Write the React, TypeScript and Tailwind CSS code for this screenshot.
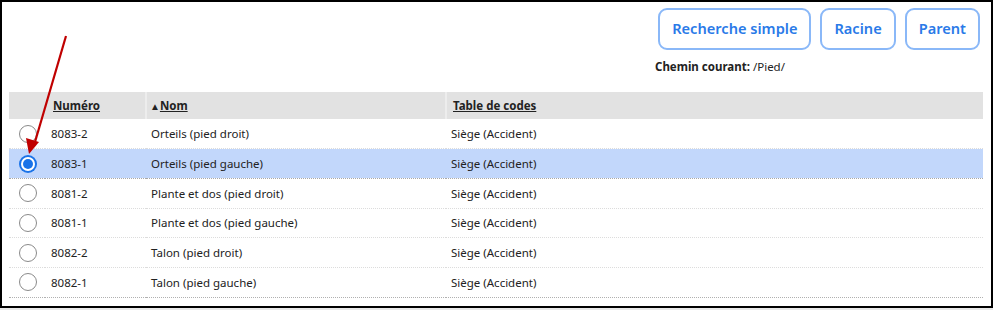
import React from "react";

const rows = [
    { num: "8083-2", nom: "Orteils (pied droit)", table: "Siège (Accident)" },
    { num: "8083-1", nom: "Orteils (pied gauche)", table: "Siège (Accident)", selected: true },
    { num: "8081-2", nom: "Plante et dos (pied droit)", table: "Siège (Accident)" },
    { num: "8081-1", nom: "Plante et dos (pied gauche)", table: "Siège (Accident)" },
    { num: "8082-2", nom: "Talon (pied droit)", table: "Siège (Accident)" },
    { num: "8082-1", nom: "Talon (pied gauche)", table: "Siège (Accident)" },
];

const Radio: React.FC<{ checked?: boolean }> = ({ checked }) =>
    checked ? (
        <span className="flex h-[18px] w-[18px] items-center justify-center rounded-full bg-[#1a73e8]">
            <span className="flex h-[14px] w-[14px] items-center justify-center rounded-full bg-white">
                <span className="h-[10px] w-[10px] rounded-full bg-[#1a73e8]" />
            </span>
        </span>
    ) : (
        <span className="block h-[18px] w-[18px] rounded-full border-[1.5px] border-[#8a8a8a] bg-white" />
    );

const App: React.FC = () => {
    return (
        <div className="h-[310px] w-[993px] bg-[#e8e8e8]">
            <div
                className="relative h-[308px] w-[993px] border-2 border-black bg-white text-[11.5px] text-[#222]"
                style={{ fontFamily: '"Segoe UI", "Noto Sans", sans-serif' }}
            >
                <div className="flex justify-end gap-[9px] pr-[11px] pt-[6px]">
                    {["Recherche simple", "Racine", "Parent"].map((label) => (
                        <button
                            key={label}
                            className="h-[42px] rounded-[9px] border-2 border-[#8ab8f8] bg-white px-[12px] text-[14.6px] font-semibold text-[#2a7ae8]"
                        >
                            {label}
                        </button>
                    ))}
                </div>

                <div className="mt-[9px] pl-[653px] leading-[16px]">
                    <span className="font-bold">Chemin courant:</span> /Pied/
                </div>

                <table className="ml-[7px] mt-[17px] w-[974px] border-collapse">
                    <thead>
                        <tr className="h-[27px] bg-[#e2e2e2] text-left font-bold">
                            <th className="w-[36px] p-0" />
                            <th className="w-[101px] border-r-2 border-[#ededed] pl-[8px] p-0">
                                <span className="underline">Numéro</span>
                            </th>
                            <th className="w-[300px] border-r-2 border-[#ededed] pl-[3px] p-0">
                                <span className="text-[10px]">▲</span>
                                <span className="underline">Nom</span>
                            </th>
                            <th className="pl-[6px] p-0">
                                <span className="underline">Table de codes</span>
                            </th>
                        </tr>
                    </thead>
                    <tbody>
                        {rows.map((r, i) => (
                            <tr
                                key={r.num}
                                className={`h-[29.7px] border-b border-dotted ${
                                    r.selected ? "bg-[#c2d7fb] border-[#a8a8a8]" : i === rows.length - 1 ? "border-[#b0b0b0]" : "border-[#dcdcdc]"
                                }`}
                            >
                                <td className="p-0 pl-[10px]">
                                    <Radio checked={r.selected} />
                                </td>
                                <td className="p-0 pl-[6px]">{r.num}</td>
                                <td className="p-0 pl-[5px]">{r.nom}</td>
                                <td className="p-0 pl-[5px]">{r.table}</td>
                            </tr>
                        ))}
                    </tbody>
                </table>

                <svg className="pointer-events-none absolute left-0 top-0" width="120" height="180" viewBox="0 0 120 180">
                    <line x1="64" y1="34" x2="33" y2="140" stroke="#c00000" strokeWidth="2.2" />
                    <polygon points="27,152 24,136 37,140" fill="#c00000" />
                </svg>
            </div>
        </div>
    );
};

export default App;
